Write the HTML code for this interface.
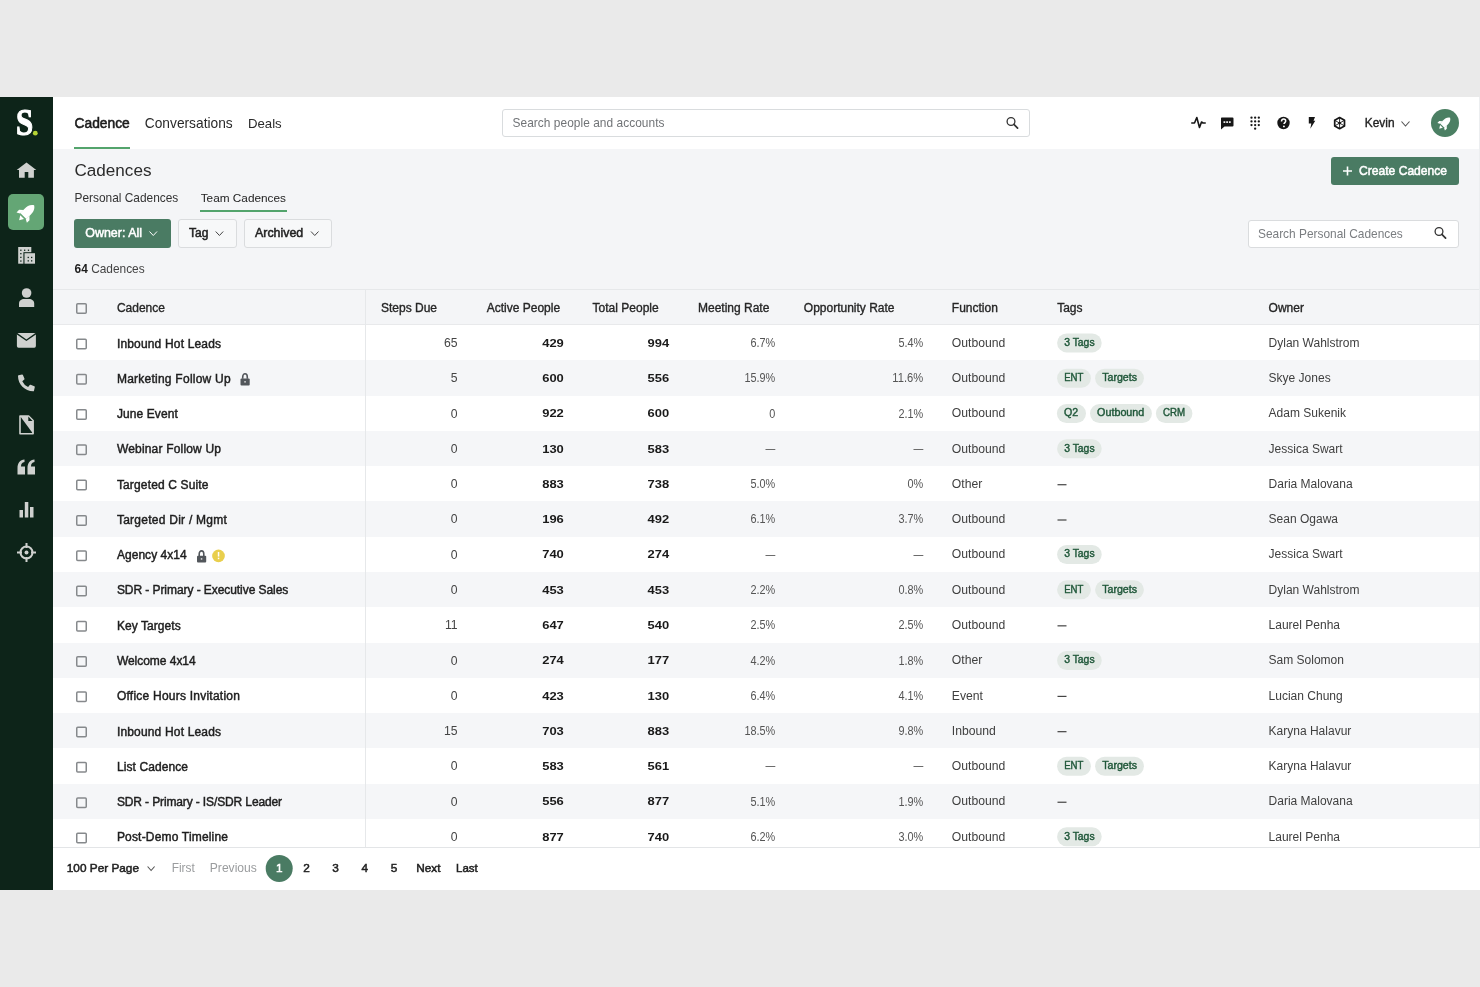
<!DOCTYPE html>
<html><head><meta charset="utf-8"><title>Cadences</title>
<style>
html,body{margin:0;padding:0}
body{width:1480px;height:987px;background:#eaeaea;position:relative;overflow:hidden;font-family:"Liberation Sans", sans-serif;}
#ov{position:absolute;left:0;top:0;will-change:transform}
</style></head><body>
<div style="position:absolute;left:0px;top:97px;width:53px;height:793px;background:#0d2419;"></div>
<div style="position:absolute;left:8px;top:194px;width:36px;height:36px;background:#64a675;border-radius:5px"></div>
<div style="position:absolute;left:53px;top:97px;width:1427px;height:52px;background:#ffffff;"></div>
<div style="position:absolute;left:53px;top:149px;width:1427px;height:741px;background:#f4f5f7;"></div>
<div style="position:absolute;left:74px;top:146.6px;width:56px;height:2.6px;background:#53a46c;"></div>
<div style="position:absolute;left:502px;top:109px;width:528px;height:28px;background:#fff;box-sizing:border-box;border:1px solid #d9dcde;border-radius:3px"></div>
<div style="position:absolute;left:1430.5px;top:109px;width:28px;height:28px;background:#4b7f63;border-radius:50%"></div>
<div style="position:absolute;left:200px;top:209.7px;width:87px;height:2.5px;background:#53a46c;"></div>
<div style="position:absolute;left:1330.5px;top:157px;width:128px;height:28px;background:#4a7b63;border-radius:3px"></div>
<div style="position:absolute;left:74px;top:219px;width:97px;height:28.5px;background:#4a7b63;border-radius:3px"></div>
<div style="position:absolute;left:178px;top:219px;width:59px;height:28.5px;background:#f7f8f9;box-sizing:border-box;border:1px solid #dadcde;border-radius:3px"></div>
<div style="position:absolute;left:244px;top:219px;width:88px;height:28.5px;background:#f7f8f9;box-sizing:border-box;border:1px solid #dadcde;border-radius:3px"></div>
<div style="position:absolute;left:1247.5px;top:219.5px;width:211px;height:28px;background:#fff;box-sizing:border-box;border:1px solid #dadcde;border-radius:3px"></div>
<div style="position:absolute;left:53px;top:289px;width:1427px;height:1px;background:#e6e8ea;"></div>
<div style="position:absolute;left:53px;top:290px;width:1427px;height:35px;background:#f4f5f7;"></div>
<div style="position:absolute;left:53px;top:324px;width:1427px;height:1px;background:#e8e9eb;"></div>
<div style="position:absolute;left:53px;top:325.00px;width:1427px;height:35.28px;background:#ffffff;"></div>
<div style="position:absolute;left:53px;top:360.28px;width:1427px;height:35.28px;background:#f5f6f8;"></div>
<div style="position:absolute;left:53px;top:395.56px;width:1427px;height:35.28px;background:#ffffff;"></div>
<div style="position:absolute;left:53px;top:430.84px;width:1427px;height:35.28px;background:#f5f6f8;"></div>
<div style="position:absolute;left:53px;top:466.12px;width:1427px;height:35.28px;background:#ffffff;"></div>
<div style="position:absolute;left:53px;top:501.40px;width:1427px;height:35.28px;background:#f5f6f8;"></div>
<div style="position:absolute;left:53px;top:536.68px;width:1427px;height:35.28px;background:#ffffff;"></div>
<div style="position:absolute;left:53px;top:571.96px;width:1427px;height:35.28px;background:#f5f6f8;"></div>
<div style="position:absolute;left:53px;top:607.24px;width:1427px;height:35.28px;background:#ffffff;"></div>
<div style="position:absolute;left:53px;top:642.52px;width:1427px;height:35.28px;background:#f5f6f8;"></div>
<div style="position:absolute;left:53px;top:677.80px;width:1427px;height:35.28px;background:#ffffff;"></div>
<div style="position:absolute;left:53px;top:713.08px;width:1427px;height:35.28px;background:#f5f6f8;"></div>
<div style="position:absolute;left:53px;top:748.36px;width:1427px;height:35.28px;background:#ffffff;"></div>
<div style="position:absolute;left:53px;top:783.64px;width:1427px;height:35.28px;background:#f5f6f8;"></div>
<div style="position:absolute;left:53px;top:818.92px;width:1427px;height:28.08px;background:#ffffff;"></div>
<div style="position:absolute;left:364.5px;top:290px;width:1px;height:557px;background:#e6e8ea;"></div>
<div style="position:absolute;left:1479px;top:97px;width:1px;height:793px;background:#eceef0;"></div>
<div style="position:absolute;left:53px;top:846.5px;width:1427px;height:1px;background:#e3e5e7;"></div>
<div style="position:absolute;left:53px;top:847.5px;width:1427px;height:42.5px;background:#ffffff;"></div>
<svg id="ov" width="1480" height="987" viewBox="0 0 1480 987" font-family="Liberation Sans, sans-serif">
<text x="0" y="0" font-family="Liberation Serif" font-weight="700" font-size="30" fill="#fff" stroke="#fff" stroke-width="0.9" transform="translate(16.1 135.2) scale(1.03 1.27)">S</text>
<circle cx="35.3" cy="133.2" r="2.4" fill="#b5d334"/>
<path d="M26.5 162.4 L36.3 170 H33.9 V177.8 H28.3 V172.1 H24.7 V177.8 H19 V170 H16.7 Z" fill="#cfd1cf"/>
<g transform="translate(26.9 212.4) rotate(45) scale(1.02)" fill="#fff"><path d="M0 -10 C3.4 -8 4.2 -4.5 4.2 -1 L4.2 5 L-4.2 5 L-4.2 -1 C-4.2 -4.5 -3.4 -8 0 -10 Z"/><path d="M-4 0.5 L-7.2 3.6 L-7.2 7.2 L-4 5.5 Z M4 0.5 L7.2 3.6 L7.2 7.2 L4 5.5 Z"/><path d="M-2.6 6.6 H2.6 L0 10.8 Z"/></g>
<rect x="18.2" y="247" width="13.1" height="16.7" fill="#cfd1cf"/><rect x="23.4" y="252.2" width="12.6" height="12" fill="#0d2419"/><rect x="24.5" y="253.2" width="10.5" height="10.5" fill="#cfd1cf"/><rect x="20.2" y="249.6" width="1.3" height="1.3" fill="#0d2419"/><rect x="24.0" y="249.6" width="1.3" height="1.3" fill="#0d2419"/><rect x="27.799999999999997" y="249.6" width="1.3" height="1.3" fill="#0d2419"/><rect x="20.2" y="253.0" width="1.3" height="1.3" fill="#0d2419"/><rect x="20.2" y="256.7" width="1.3" height="1.3" fill="#0d2419"/><rect x="20.2" y="260.4" width="1.3" height="1.3" fill="#0d2419"/><rect x="27.599999999999998" y="256.79999999999995" width="1.3" height="1.3" fill="#0d2419"/><rect x="31.0" y="256.79999999999995" width="1.3" height="1.3" fill="#0d2419"/><rect x="27.599999999999998" y="260.2" width="1.3" height="1.3" fill="#0d2419"/><rect x="31.0" y="260.2" width="1.3" height="1.3" fill="#0d2419"/>
<g transform="translate(19 288) scale(1)"><circle cx="7.6" cy="5" r="4.8" fill="#cfd1cf"/><path d="M0 19 V15.5 C0 12.5 2.5 11 5 11 H10.2 C12.7 11 15.2 12.5 15.2 15.5 V19 Z" fill="#cfd1cf"/></g>
<rect x="16.9" y="332.9" width="19" height="14.8" rx="1.6" fill="#cfd1cf"/><path d="M16.9 333.6 L26.4 340.2 L35.9 333.6" fill="none" stroke="#0d2419" stroke-width="1.4"/>
<g transform="translate(18 374.5) scale(0.0328)"><path d="M497.39 361.8l-112-48a24 24 0 0 0-28 6.9l-49.6 60.6A370.66 370.66 0 0 1 130.6 204.11l60.6-49.6a23.94 23.94 0 0 0 6.9-28l-48-112A24.16 24.16 0 0 0 122.6.61l-104 24A24 24 0 0 0 0 48c0 256.5 207.9 464 464 464a24 24 0 0 0 23.4-18.6l24-104a24.29 24.29 0 0 0-14.01-27.6z" fill="#cfd1cf"/></g>
<path d="M20 416.1 H28.6 L33.1 420.6 V433.8 H20 Z" fill="none" stroke="#cfd1cf" stroke-width="1.6" stroke-linejoin="round"/><path d="M20 416.1 H28.6 L33.1 420.6 V433.8 Z" fill="#cfd1cf"/><path d="M28.3 416.6 V421 H32.6 Z" fill="#0d2419"/>
<g transform="translate(17 459) scale(1)"><path d="M0.5 9 C0.5 4 3 1 7.5 0.5 V3 C5 3.5 4 5 4 7.5 H8 V15.5 H0.5 Z" fill="#cfd1cf"/><path d="M10.5 9 C10.5 4 13 1 17.5 0.5 V3 C15 3.5 14 5 14 7.5 H18 V15.5 H10.5 Z" fill="#cfd1cf"/></g>
<g transform="translate(19 501) scale(1)"><rect x="0.5" y="9" width="3.5" height="7.5" fill="#cfd1cf"/><rect x="5.8" y="1" width="3.5" height="15.5" fill="#cfd1cf"/><rect x="11" y="6" width="3.5" height="10.5" fill="#cfd1cf"/></g>
<g transform="translate(17 543) scale(1)"><circle cx="9.5" cy="9.5" r="6" fill="none" stroke="#cfd1cf" stroke-width="2"/><circle cx="9.5" cy="9.5" r="2" fill="#cfd1cf"/><path d="M9.5 0 V5 M9.5 14 V19 M0 9.5 H5 M14 9.5 H19" stroke="#cfd1cf" stroke-width="2"/></g>
<text x="74.50" y="128.00" font-size="13.8" fill="#1c1c1c" stroke="#1c1c1c" stroke-width="0.55">Cadence</text>
<text x="144.80" y="128.00" font-size="13.75" fill="#2a2a2a">Conversations</text>
<text x="248.00" y="128.00" font-size="13.2" fill="#2a2a2a">Deals</text>
<text x="512.50" y="127.00" font-size="11.9" fill="#707376" letter-spacing="0.05">Search people and accounts</text>
<g transform="translate(1006 116.5) scale(1)"><circle cx="5" cy="5" r="3.9" fill="none" stroke="#333" stroke-width="1.3"/><path d="M7.9 7.9 L11.6 11.6" stroke="#333" stroke-width="1.7" stroke-linecap="round"/></g>
<g transform="translate(1191 116) scale(1)"><path d="M0.8 7 H3.5 L5.8 1.5 L8.5 11.5 L10.5 6 L12 7 H14.2" fill="none" stroke="#161616" stroke-width="1.6" stroke-linejoin="round" stroke-linecap="round"/></g>
<g transform="translate(1220 117) scale(1)"><path d="M1.5 0.5 H12.5 A1 1 0 0 1 13.5 1.5 V8.5 A1 1 0 0 1 12.5 9.5 H4.5 L1 12.5 V1.5 A1 1 0 0 1 1.5 0.5 Z" fill="#161616"/><rect x="3.5" y="4.3" width="1.8" height="1.6" fill="#fff"/><rect x="6.2" y="4.3" width="1.8" height="1.6" fill="#fff"/><rect x="8.9" y="4.3" width="1.8" height="1.6" fill="#fff"/></g>
<g transform="translate(1249 116) scale(1)"><circle cx="2.5" cy="1.7" r="1.15" fill="#161616"/><circle cx="2.5" cy="5.4" r="1.15" fill="#161616"/><circle cx="2.5" cy="9.1" r="1.15" fill="#161616"/><circle cx="6.15" cy="1.7" r="1.15" fill="#161616"/><circle cx="6.15" cy="5.4" r="1.15" fill="#161616"/><circle cx="6.15" cy="9.1" r="1.15" fill="#161616"/><circle cx="9.8" cy="1.7" r="1.15" fill="#161616"/><circle cx="9.8" cy="5.4" r="1.15" fill="#161616"/><circle cx="9.8" cy="9.1" r="1.15" fill="#161616"/><circle cx="6.15" cy="12.7" r="1.15" fill="#161616"/></g>
<g transform="translate(1277 116.5) scale(1)"><circle cx="6.5" cy="6.5" r="6.2" fill="#161616"/><path d="M4.5 5 C4.5 3.2 5.5 2.6 6.6 2.6 C7.8 2.6 8.7 3.4 8.7 4.6 C8.7 6 7 6.2 7 7.6" fill="none" stroke="#fff" stroke-width="1.5"/><circle cx="6.9" cy="9.9" r="0.95" fill="#fff"/></g>
<g transform="translate(1308.5 117) scale(1)"><path d="M0.3 0 H6.5 L5 3.8 H6.8 L1.8 11.8 L2.8 6.5 H0.3 Z" fill="#161616"/></g>
<g transform="translate(1333.5 116.5) scale(1)"><path d="M6.1 1 L11 3.8 V9.4 L6.1 12.2 L1.2 9.4 V3.8 Z" fill="none" stroke="#161616" stroke-width="1.7" stroke-linejoin="round"/><path d="M6.1 1 V12.2 M1.2 3.8 L11 9.4 M11 3.8 L1.2 9.4" stroke="#161616" stroke-width="0.9"/><circle cx="6.1" cy="6.6" r="1.3" fill="#161616"/></g>
<text x="1364.80" y="127.00" font-size="11.9" fill="#222" stroke="#222" stroke-width="0.35">Kevin</text>
<g transform="translate(1401.5 121.5) scale(1)"><path d="M0 0 L4.0 4.5 L8 0" fill="none" stroke="#555" stroke-width="1.1"/></g>
<g transform="translate(1444.9 123.0) rotate(45) scale(0.74)" fill="#fff"><path d="M0 -10 C3.4 -8 4.2 -4.5 4.2 -1 L4.2 5 L-4.2 5 L-4.2 -1 C-4.2 -4.5 -3.4 -8 0 -10 Z"/><path d="M-4 0.5 L-7.2 3.6 L-7.2 7.2 L-4 5.5 Z M4 0.5 L7.2 3.6 L7.2 7.2 L4 5.5 Z"/><path d="M-2.6 6.6 H2.6 L0 10.8 Z"/></g>
<text x="74.50" y="176.40" font-size="17.1" fill="#2b2b2b">Cadences</text>
<text x="74.50" y="201.70" font-size="11.9" fill="#333">Personal Cadences</text>
<text x="200.70" y="201.70" font-size="11.8" fill="#222">Team Cadences</text>
<g transform="translate(1342.5 166) scale(1)"><path d="M5 0.5 V9.5 M0.5 5 H9.5" stroke="#fff" stroke-width="1.6"/></g>
<text x="1359.00" y="174.90" font-size="12.1" fill="#fff" stroke="#fff" stroke-width="0.5">Create Cadence</text>
<text x="85.30" y="236.80" font-size="12.45" fill="#fff" stroke="#fff" stroke-width="0.5">Owner: All</text>
<g transform="translate(149.5 231.5) scale(1)"><path d="M0 0 L3.75 4 L7.5 0" fill="none" stroke="#fff" stroke-width="1.0"/></g>
<text x="189.00" y="236.80" font-size="12.0" fill="#222" stroke="#222" stroke-width="0.5">Tag</text>
<g transform="translate(215.7 231.5) scale(1)"><path d="M0 0 L3.75 4 L7.5 0" fill="none" stroke="#444" stroke-width="1.0"/></g>
<text x="255.00" y="236.80" font-size="12.4" fill="#222" stroke="#222" stroke-width="0.5">Archived</text>
<g transform="translate(311 231.5) scale(1)"><path d="M0 0 L3.75 4 L7.5 0" fill="none" stroke="#444" stroke-width="1.0"/></g>
<text x="74.60" y="272.80" font-size="11.9" fill="#444"><tspan font-weight="700" fill="#1c1c1c">64</tspan> Cadences</text>
<text x="1258.00" y="237.50" font-size="11.9" fill="#7a7d80">Search Personal Cadences</text>
<g transform="translate(1434 226.5) scale(1)"><circle cx="5" cy="5" r="3.9" fill="none" stroke="#333" stroke-width="1.3"/><path d="M7.9 7.9 L11.6 11.6" stroke="#333" stroke-width="1.7" stroke-linecap="round"/></g>
<rect x="76.75" y="303.75" width="9.5" height="9.5" rx="1" fill="none" stroke="#86898c" stroke-width="1.5"/>
<text x="116.90" y="312.00" font-size="12.0" fill="#262626" stroke="#262626" stroke-width="0.35">Cadence</text>
<text x="381.00" y="312.00" font-size="12.0" fill="#262626" stroke="#262626" stroke-width="0.35">Steps Due</text>
<text x="486.70" y="312.00" font-size="12.0" fill="#262626" stroke="#262626" stroke-width="0.35">Active People</text>
<text x="592.60" y="312.00" font-size="12.0" fill="#262626" stroke="#262626" stroke-width="0.35">Total People</text>
<text x="698.00" y="312.00" font-size="12.0" fill="#262626" stroke="#262626" stroke-width="0.35">Meeting Rate</text>
<text x="803.80" y="312.00" font-size="12.0" fill="#262626" stroke="#262626" stroke-width="0.35">Opportunity Rate</text>
<text x="951.80" y="312.00" font-size="12.0" fill="#262626" stroke="#262626" stroke-width="0.35">Function</text>
<text x="1057.20" y="312.00" font-size="12.0" fill="#262626" stroke="#262626" stroke-width="0.35">Tags</text>
<text x="1268.60" y="312.00" font-size="12.0" fill="#262626" stroke="#262626" stroke-width="0.35">Owner</text>
<rect x="76.75" y="339.25" width="9.5" height="9.5" rx="1" fill="none" stroke="#86898c" stroke-width="1.5"/>
<text x="116.90" y="347.50" font-size="12.0" fill="#1e1e1e" stroke="#1e1e1e" stroke-width="0.45" textLength="104.10" lengthAdjust="spacing">Inbound Hot Leads</text>
<text x="457.60" y="347.00" font-size="12.2" fill="#444" text-anchor="end">65</text>
<text x="563.80" y="346.70" font-size="11.8" fill="#1a1a1a" font-weight="700" text-anchor="end" textLength="21.60" lengthAdjust="spacingAndGlyphs">429</text>
<text x="669.20" y="346.70" font-size="11.8" fill="#1a1a1a" font-weight="700" text-anchor="end" textLength="21.60" lengthAdjust="spacingAndGlyphs">994</text>
<text x="775.30" y="347.00" font-size="12.3" fill="#555" text-anchor="end" textLength="24.81" lengthAdjust="spacingAndGlyphs">6.7%</text>
<text x="923.20" y="347.00" font-size="12.3" fill="#555" text-anchor="end" textLength="24.81" lengthAdjust="spacingAndGlyphs">5.4%</text>
<text x="951.80" y="346.80" font-size="12.2" fill="#404040">Outbound</text>
<rect x="1057.1" y="333.40" width="44.6" height="19" rx="9.5" fill="#e3e9e5"/>
<text x="1064.20" y="345.70" font-size="10.0" fill="#1f5739" stroke="#1f5739" stroke-width="0.4" textLength="30.40" lengthAdjust="spacingAndGlyphs">3 Tags</text>
<text x="1268.60" y="346.80" font-size="12.0" fill="#404040">Dylan Wahlstrom</text>
<rect x="76.75" y="374.53" width="9.5" height="9.5" rx="1" fill="none" stroke="#86898c" stroke-width="1.5"/>
<text x="116.90" y="382.78" font-size="12.0" fill="#1e1e1e" stroke="#1e1e1e" stroke-width="0.45" textLength="113.80" lengthAdjust="spacing">Marketing Follow Up</text>
<g transform="translate(240.3 372.78) scale(1)"><path d="M2.4 6 V4.2 C2.4 2.2 3.5 1 4.7 1 C5.9 1 7 2.2 7 4.2 V6" fill="none" stroke="#52565b" stroke-width="1.6"/><rect x="0.2" y="5.8" width="9.2" height="6.8" rx="1" fill="#52565b"/><rect x="4" y="8.3" width="1.5" height="1.5" fill="#ddd"/></g>
<text x="457.60" y="382.28" font-size="12.2" fill="#444" text-anchor="end">5</text>
<text x="563.80" y="381.98" font-size="11.8" fill="#1a1a1a" font-weight="700" text-anchor="end" textLength="21.60" lengthAdjust="spacingAndGlyphs">600</text>
<text x="669.20" y="381.98" font-size="11.8" fill="#1a1a1a" font-weight="700" text-anchor="end" textLength="21.60" lengthAdjust="spacingAndGlyphs">556</text>
<text x="775.30" y="382.28" font-size="12.3" fill="#555" text-anchor="end" textLength="30.86" lengthAdjust="spacingAndGlyphs">15.9%</text>
<text x="923.20" y="382.28" font-size="12.3" fill="#555" text-anchor="end" textLength="30.86" lengthAdjust="spacingAndGlyphs">11.6%</text>
<text x="951.80" y="382.08" font-size="12.2" fill="#404040">Outbound</text>
<rect x="1057.1" y="368.68" width="33.8" height="19" rx="9.5" fill="#e3e9e5"/>
<text x="1064.20" y="380.98" font-size="10.0" fill="#1f5739" stroke="#1f5739" stroke-width="0.4" textLength="19.20" lengthAdjust="spacingAndGlyphs">ENT</text>
<rect x="1095.1" y="368.68" width="48.8" height="19" rx="9.5" fill="#e3e9e5"/>
<text x="1102.20" y="380.98" font-size="10.0" fill="#1f5739" stroke="#1f5739" stroke-width="0.4" textLength="34.80" lengthAdjust="spacingAndGlyphs">Targets</text>
<text x="1268.60" y="382.08" font-size="12.0" fill="#404040">Skye Jones</text>
<rect x="76.75" y="409.81" width="9.5" height="9.5" rx="1" fill="none" stroke="#86898c" stroke-width="1.5"/>
<text x="116.90" y="418.06" font-size="12.0" fill="#1e1e1e" stroke="#1e1e1e" stroke-width="0.45" textLength="60.90" lengthAdjust="spacing">June Event</text>
<text x="457.60" y="417.56" font-size="12.2" fill="#444" text-anchor="end">0</text>
<text x="563.80" y="417.26" font-size="11.8" fill="#1a1a1a" font-weight="700" text-anchor="end" textLength="21.60" lengthAdjust="spacingAndGlyphs">922</text>
<text x="669.20" y="417.26" font-size="11.8" fill="#1a1a1a" font-weight="700" text-anchor="end" textLength="21.60" lengthAdjust="spacingAndGlyphs">600</text>
<text x="775.30" y="417.56" font-size="12.3" fill="#555" text-anchor="end" textLength="6.05" lengthAdjust="spacingAndGlyphs">0</text>
<text x="923.20" y="417.56" font-size="12.3" fill="#555" text-anchor="end" textLength="24.81" lengthAdjust="spacingAndGlyphs">2.1%</text>
<text x="951.80" y="417.36" font-size="12.2" fill="#404040">Outbound</text>
<rect x="1056.9" y="403.96" width="29.1" height="19" rx="9.5" fill="#e3e9e5"/>
<text x="1064.00" y="416.26" font-size="10.0" fill="#1f5739" stroke="#1f5739" stroke-width="0.4" textLength="14.20" lengthAdjust="spacingAndGlyphs">Q2</text>
<rect x="1090" y="403.96" width="61.9" height="19" rx="9.5" fill="#e3e9e5"/>
<text x="1097.10" y="416.26" font-size="10.0" fill="#1f5739" stroke="#1f5739" stroke-width="0.4" textLength="47.20" lengthAdjust="spacingAndGlyphs">Outbound</text>
<rect x="1155.9" y="403.96" width="36.5" height="19" rx="9.5" fill="#e3e9e5"/>
<text x="1163.00" y="416.26" font-size="10.0" fill="#1f5739" stroke="#1f5739" stroke-width="0.4" textLength="22.10" lengthAdjust="spacingAndGlyphs">CRM</text>
<text x="1268.60" y="417.36" font-size="12.0" fill="#404040">Adam Sukenik</text>
<rect x="76.75" y="445.09000000000003" width="9.5" height="9.5" rx="1" fill="none" stroke="#86898c" stroke-width="1.5"/>
<text x="116.90" y="453.34" font-size="12.0" fill="#1e1e1e" stroke="#1e1e1e" stroke-width="0.45" textLength="104.10" lengthAdjust="spacing">Webinar Follow Up</text>
<text x="457.60" y="452.84" font-size="12.2" fill="#444" text-anchor="end">0</text>
<text x="563.80" y="452.54" font-size="11.8" fill="#1a1a1a" font-weight="700" text-anchor="end" textLength="21.60" lengthAdjust="spacingAndGlyphs">130</text>
<text x="669.20" y="452.54" font-size="11.8" fill="#1a1a1a" font-weight="700" text-anchor="end" textLength="21.60" lengthAdjust="spacingAndGlyphs">583</text>
<text x="775.30" y="452.84" font-size="12.3" fill="#555" text-anchor="end" textLength="9.80" lengthAdjust="spacingAndGlyphs">—</text>
<text x="923.20" y="452.84" font-size="12.3" fill="#555" text-anchor="end" textLength="9.80" lengthAdjust="spacingAndGlyphs">—</text>
<text x="951.80" y="452.64" font-size="12.2" fill="#404040">Outbound</text>
<rect x="1057.1" y="439.24" width="44.6" height="19" rx="9.5" fill="#e3e9e5"/>
<text x="1064.20" y="451.54" font-size="10.0" fill="#1f5739" stroke="#1f5739" stroke-width="0.4" textLength="30.40" lengthAdjust="spacingAndGlyphs">3 Tags</text>
<text x="1268.60" y="452.64" font-size="12.0" fill="#404040">Jessica Swart</text>
<rect x="76.75" y="480.37" width="9.5" height="9.5" rx="1" fill="none" stroke="#86898c" stroke-width="1.5"/>
<text x="116.90" y="488.62" font-size="12.0" fill="#1e1e1e" stroke="#1e1e1e" stroke-width="0.45" textLength="91.60" lengthAdjust="spacing">Targeted C Suite</text>
<text x="457.60" y="488.12" font-size="12.2" fill="#444" text-anchor="end">0</text>
<text x="563.80" y="487.82" font-size="11.8" fill="#1a1a1a" font-weight="700" text-anchor="end" textLength="21.60" lengthAdjust="spacingAndGlyphs">883</text>
<text x="669.20" y="487.82" font-size="11.8" fill="#1a1a1a" font-weight="700" text-anchor="end" textLength="21.60" lengthAdjust="spacingAndGlyphs">738</text>
<text x="775.30" y="488.12" font-size="12.3" fill="#555" text-anchor="end" textLength="24.81" lengthAdjust="spacingAndGlyphs">5.0%</text>
<text x="923.20" y="488.12" font-size="12.3" fill="#555" text-anchor="end" textLength="15.73" lengthAdjust="spacingAndGlyphs">0%</text>
<text x="951.80" y="487.92" font-size="12.2" fill="#404040">Other</text>
<rect x="1057.5" y="484.12" width="9" height="1.2" fill="#444"/>
<text x="1268.60" y="487.92" font-size="12.0" fill="#404040">Daria Malovana</text>
<rect x="76.75" y="515.65" width="9.5" height="9.5" rx="1" fill="none" stroke="#86898c" stroke-width="1.5"/>
<text x="116.90" y="523.90" font-size="12.0" fill="#1e1e1e" stroke="#1e1e1e" stroke-width="0.45" textLength="110.00" lengthAdjust="spacing">Targeted Dir / Mgmt</text>
<text x="457.60" y="523.40" font-size="12.2" fill="#444" text-anchor="end">0</text>
<text x="563.80" y="523.10" font-size="11.8" fill="#1a1a1a" font-weight="700" text-anchor="end" textLength="21.60" lengthAdjust="spacingAndGlyphs">196</text>
<text x="669.20" y="523.10" font-size="11.8" fill="#1a1a1a" font-weight="700" text-anchor="end" textLength="21.60" lengthAdjust="spacingAndGlyphs">492</text>
<text x="775.30" y="523.40" font-size="12.3" fill="#555" text-anchor="end" textLength="24.81" lengthAdjust="spacingAndGlyphs">6.1%</text>
<text x="923.20" y="523.40" font-size="12.3" fill="#555" text-anchor="end" textLength="24.81" lengthAdjust="spacingAndGlyphs">3.7%</text>
<text x="951.80" y="523.20" font-size="12.2" fill="#404040">Outbound</text>
<rect x="1057.5" y="519.40" width="9" height="1.2" fill="#444"/>
<text x="1268.60" y="523.20" font-size="12.0" fill="#404040">Sean Ogawa</text>
<rect x="76.75" y="550.9300000000001" width="9.5" height="9.5" rx="1" fill="none" stroke="#86898c" stroke-width="1.5"/>
<text x="116.90" y="559.18" font-size="12.0" fill="#1e1e1e" stroke="#1e1e1e" stroke-width="0.45" textLength="69.80" lengthAdjust="spacing">Agency 4x14</text>
<g transform="translate(196.8 549.8800000000001) scale(1)"><path d="M2.4 6 V4.2 C2.4 2.2 3.5 1 4.7 1 C5.9 1 7 2.2 7 4.2 V6" fill="none" stroke="#52565b" stroke-width="1.6"/><rect x="0.2" y="5.8" width="9.2" height="6.8" rx="1" fill="#52565b"/><rect x="4" y="8.3" width="1.5" height="1.5" fill="#ddd"/></g>
<circle cx="218.5" cy="555.88" r="6.35" fill="#e9cf4d"/><rect x="217.8" y="551.98" width="1.5" height="4.6" fill="#fff"/><rect x="217.8" y="557.68" width="1.5" height="1.5" fill="#fff"/>
<text x="457.60" y="558.68" font-size="12.2" fill="#444" text-anchor="end">0</text>
<text x="563.80" y="558.38" font-size="11.8" fill="#1a1a1a" font-weight="700" text-anchor="end" textLength="21.60" lengthAdjust="spacingAndGlyphs">740</text>
<text x="669.20" y="558.38" font-size="11.8" fill="#1a1a1a" font-weight="700" text-anchor="end" textLength="21.60" lengthAdjust="spacingAndGlyphs">274</text>
<text x="775.30" y="558.68" font-size="12.3" fill="#555" text-anchor="end" textLength="9.80" lengthAdjust="spacingAndGlyphs">—</text>
<text x="923.20" y="558.68" font-size="12.3" fill="#555" text-anchor="end" textLength="9.80" lengthAdjust="spacingAndGlyphs">—</text>
<text x="951.80" y="558.48" font-size="12.2" fill="#404040">Outbound</text>
<rect x="1057.1" y="545.08" width="44.6" height="19" rx="9.5" fill="#e3e9e5"/>
<text x="1064.20" y="557.38" font-size="10.0" fill="#1f5739" stroke="#1f5739" stroke-width="0.4" textLength="30.40" lengthAdjust="spacingAndGlyphs">3 Tags</text>
<text x="1268.60" y="558.48" font-size="12.0" fill="#404040">Jessica Swart</text>
<rect x="76.75" y="586.21" width="9.5" height="9.5" rx="1" fill="none" stroke="#86898c" stroke-width="1.5"/>
<text x="116.90" y="594.46" font-size="12.0" fill="#1e1e1e" stroke="#1e1e1e" stroke-width="0.45" textLength="171.40" lengthAdjust="spacing">SDR - Primary - Executive Sales</text>
<text x="457.60" y="593.96" font-size="12.2" fill="#444" text-anchor="end">0</text>
<text x="563.80" y="593.66" font-size="11.8" fill="#1a1a1a" font-weight="700" text-anchor="end" textLength="21.60" lengthAdjust="spacingAndGlyphs">453</text>
<text x="669.20" y="593.66" font-size="11.8" fill="#1a1a1a" font-weight="700" text-anchor="end" textLength="21.60" lengthAdjust="spacingAndGlyphs">453</text>
<text x="775.30" y="593.96" font-size="12.3" fill="#555" text-anchor="end" textLength="24.81" lengthAdjust="spacingAndGlyphs">2.2%</text>
<text x="923.20" y="593.96" font-size="12.3" fill="#555" text-anchor="end" textLength="24.81" lengthAdjust="spacingAndGlyphs">0.8%</text>
<text x="951.80" y="593.76" font-size="12.2" fill="#404040">Outbound</text>
<rect x="1057.1" y="580.36" width="33.8" height="19" rx="9.5" fill="#e3e9e5"/>
<text x="1064.20" y="592.66" font-size="10.0" fill="#1f5739" stroke="#1f5739" stroke-width="0.4" textLength="19.20" lengthAdjust="spacingAndGlyphs">ENT</text>
<rect x="1095.1" y="580.36" width="48.8" height="19" rx="9.5" fill="#e3e9e5"/>
<text x="1102.20" y="592.66" font-size="10.0" fill="#1f5739" stroke="#1f5739" stroke-width="0.4" textLength="34.80" lengthAdjust="spacingAndGlyphs">Targets</text>
<text x="1268.60" y="593.76" font-size="12.0" fill="#404040">Dylan Wahlstrom</text>
<rect x="76.75" y="621.49" width="9.5" height="9.5" rx="1" fill="none" stroke="#86898c" stroke-width="1.5"/>
<text x="116.90" y="629.74" font-size="12.0" fill="#1e1e1e" stroke="#1e1e1e" stroke-width="0.45" textLength="63.80" lengthAdjust="spacing">Key Targets</text>
<text x="457.60" y="629.24" font-size="12.2" fill="#444" text-anchor="end">11</text>
<text x="563.80" y="628.94" font-size="11.8" fill="#1a1a1a" font-weight="700" text-anchor="end" textLength="21.60" lengthAdjust="spacingAndGlyphs">647</text>
<text x="669.20" y="628.94" font-size="11.8" fill="#1a1a1a" font-weight="700" text-anchor="end" textLength="21.60" lengthAdjust="spacingAndGlyphs">540</text>
<text x="775.30" y="629.24" font-size="12.3" fill="#555" text-anchor="end" textLength="24.81" lengthAdjust="spacingAndGlyphs">2.5%</text>
<text x="923.20" y="629.24" font-size="12.3" fill="#555" text-anchor="end" textLength="24.81" lengthAdjust="spacingAndGlyphs">2.5%</text>
<text x="951.80" y="629.04" font-size="12.2" fill="#404040">Outbound</text>
<rect x="1057.5" y="625.24" width="9" height="1.2" fill="#444"/>
<text x="1268.60" y="629.04" font-size="12.0" fill="#404040">Laurel Penha</text>
<rect x="76.75" y="656.77" width="9.5" height="9.5" rx="1" fill="none" stroke="#86898c" stroke-width="1.5"/>
<text x="116.90" y="665.02" font-size="12.0" fill="#1e1e1e" stroke="#1e1e1e" stroke-width="0.45" textLength="78.80" lengthAdjust="spacing">Welcome 4x14</text>
<text x="457.60" y="664.52" font-size="12.2" fill="#444" text-anchor="end">0</text>
<text x="563.80" y="664.22" font-size="11.8" fill="#1a1a1a" font-weight="700" text-anchor="end" textLength="21.60" lengthAdjust="spacingAndGlyphs">274</text>
<text x="669.20" y="664.22" font-size="11.8" fill="#1a1a1a" font-weight="700" text-anchor="end" textLength="21.60" lengthAdjust="spacingAndGlyphs">177</text>
<text x="775.30" y="664.52" font-size="12.3" fill="#555" text-anchor="end" textLength="24.81" lengthAdjust="spacingAndGlyphs">4.2%</text>
<text x="923.20" y="664.52" font-size="12.3" fill="#555" text-anchor="end" textLength="24.81" lengthAdjust="spacingAndGlyphs">1.8%</text>
<text x="951.80" y="664.32" font-size="12.2" fill="#404040">Other</text>
<rect x="1057.1" y="650.92" width="44.6" height="19" rx="9.5" fill="#e3e9e5"/>
<text x="1064.20" y="663.22" font-size="10.0" fill="#1f5739" stroke="#1f5739" stroke-width="0.4" textLength="30.40" lengthAdjust="spacingAndGlyphs">3 Tags</text>
<text x="1268.60" y="664.32" font-size="12.0" fill="#404040">Sam Solomon</text>
<rect x="76.75" y="692.05" width="9.5" height="9.5" rx="1" fill="none" stroke="#86898c" stroke-width="1.5"/>
<text x="116.90" y="700.30" font-size="12.0" fill="#1e1e1e" stroke="#1e1e1e" stroke-width="0.45" textLength="123.00" lengthAdjust="spacing">Office Hours Invitation</text>
<text x="457.60" y="699.80" font-size="12.2" fill="#444" text-anchor="end">0</text>
<text x="563.80" y="699.50" font-size="11.8" fill="#1a1a1a" font-weight="700" text-anchor="end" textLength="21.60" lengthAdjust="spacingAndGlyphs">423</text>
<text x="669.20" y="699.50" font-size="11.8" fill="#1a1a1a" font-weight="700" text-anchor="end" textLength="21.60" lengthAdjust="spacingAndGlyphs">130</text>
<text x="775.30" y="699.80" font-size="12.3" fill="#555" text-anchor="end" textLength="24.81" lengthAdjust="spacingAndGlyphs">6.4%</text>
<text x="923.20" y="699.80" font-size="12.3" fill="#555" text-anchor="end" textLength="24.81" lengthAdjust="spacingAndGlyphs">4.1%</text>
<text x="951.80" y="699.60" font-size="12.2" fill="#404040">Event</text>
<rect x="1057.5" y="695.80" width="9" height="1.2" fill="#444"/>
<text x="1268.60" y="699.60" font-size="12.0" fill="#404040">Lucian Chung</text>
<rect x="76.75" y="727.33" width="9.5" height="9.5" rx="1" fill="none" stroke="#86898c" stroke-width="1.5"/>
<text x="116.90" y="735.58" font-size="12.0" fill="#1e1e1e" stroke="#1e1e1e" stroke-width="0.45" textLength="104.10" lengthAdjust="spacing">Inbound Hot Leads</text>
<text x="457.60" y="735.08" font-size="12.2" fill="#444" text-anchor="end">15</text>
<text x="563.80" y="734.78" font-size="11.8" fill="#1a1a1a" font-weight="700" text-anchor="end" textLength="21.60" lengthAdjust="spacingAndGlyphs">703</text>
<text x="669.20" y="734.78" font-size="11.8" fill="#1a1a1a" font-weight="700" text-anchor="end" textLength="21.60" lengthAdjust="spacingAndGlyphs">883</text>
<text x="775.30" y="735.08" font-size="12.3" fill="#555" text-anchor="end" textLength="30.86" lengthAdjust="spacingAndGlyphs">18.5%</text>
<text x="923.20" y="735.08" font-size="12.3" fill="#555" text-anchor="end" textLength="24.81" lengthAdjust="spacingAndGlyphs">9.8%</text>
<text x="951.80" y="734.88" font-size="12.2" fill="#404040">Inbound</text>
<rect x="1057.5" y="731.08" width="9" height="1.2" fill="#444"/>
<text x="1268.60" y="734.88" font-size="12.0" fill="#404040">Karyna Halavur</text>
<rect x="76.75" y="762.61" width="9.5" height="9.5" rx="1" fill="none" stroke="#86898c" stroke-width="1.5"/>
<text x="116.90" y="770.86" font-size="12.0" fill="#1e1e1e" stroke="#1e1e1e" stroke-width="0.45" textLength="71.10" lengthAdjust="spacing">List Cadence</text>
<text x="457.60" y="770.36" font-size="12.2" fill="#444" text-anchor="end">0</text>
<text x="563.80" y="770.06" font-size="11.8" fill="#1a1a1a" font-weight="700" text-anchor="end" textLength="21.60" lengthAdjust="spacingAndGlyphs">583</text>
<text x="669.20" y="770.06" font-size="11.8" fill="#1a1a1a" font-weight="700" text-anchor="end" textLength="21.60" lengthAdjust="spacingAndGlyphs">561</text>
<text x="775.30" y="770.36" font-size="12.3" fill="#555" text-anchor="end" textLength="9.80" lengthAdjust="spacingAndGlyphs">—</text>
<text x="923.20" y="770.36" font-size="12.3" fill="#555" text-anchor="end" textLength="9.80" lengthAdjust="spacingAndGlyphs">—</text>
<text x="951.80" y="770.16" font-size="12.2" fill="#404040">Outbound</text>
<rect x="1057.1" y="756.76" width="33.8" height="19" rx="9.5" fill="#e3e9e5"/>
<text x="1064.20" y="769.06" font-size="10.0" fill="#1f5739" stroke="#1f5739" stroke-width="0.4" textLength="19.20" lengthAdjust="spacingAndGlyphs">ENT</text>
<rect x="1095.1" y="756.76" width="48.8" height="19" rx="9.5" fill="#e3e9e5"/>
<text x="1102.20" y="769.06" font-size="10.0" fill="#1f5739" stroke="#1f5739" stroke-width="0.4" textLength="34.80" lengthAdjust="spacingAndGlyphs">Targets</text>
<text x="1268.60" y="770.16" font-size="12.0" fill="#404040">Karyna Halavur</text>
<rect x="76.75" y="797.89" width="9.5" height="9.5" rx="1" fill="none" stroke="#86898c" stroke-width="1.5"/>
<text x="116.90" y="806.14" font-size="12.0" fill="#1e1e1e" stroke="#1e1e1e" stroke-width="0.45" textLength="165.20" lengthAdjust="spacing">SDR - Primary - IS/SDR Leader</text>
<text x="457.60" y="805.64" font-size="12.2" fill="#444" text-anchor="end">0</text>
<text x="563.80" y="805.34" font-size="11.8" fill="#1a1a1a" font-weight="700" text-anchor="end" textLength="21.60" lengthAdjust="spacingAndGlyphs">556</text>
<text x="669.20" y="805.34" font-size="11.8" fill="#1a1a1a" font-weight="700" text-anchor="end" textLength="21.60" lengthAdjust="spacingAndGlyphs">877</text>
<text x="775.30" y="805.64" font-size="12.3" fill="#555" text-anchor="end" textLength="24.81" lengthAdjust="spacingAndGlyphs">5.1%</text>
<text x="923.20" y="805.64" font-size="12.3" fill="#555" text-anchor="end" textLength="24.81" lengthAdjust="spacingAndGlyphs">1.9%</text>
<text x="951.80" y="805.44" font-size="12.2" fill="#404040">Outbound</text>
<rect x="1057.5" y="801.64" width="9" height="1.2" fill="#444"/>
<text x="1268.60" y="805.44" font-size="12.0" fill="#404040">Daria Malovana</text>
<rect x="76.75" y="833.1700000000001" width="9.5" height="9.5" rx="1" fill="none" stroke="#86898c" stroke-width="1.5"/>
<text x="116.90" y="841.42" font-size="12.0" fill="#1e1e1e" stroke="#1e1e1e" stroke-width="0.45" textLength="111.10" lengthAdjust="spacing">Post-Demo Timeline</text>
<text x="457.60" y="840.92" font-size="12.2" fill="#444" text-anchor="end">0</text>
<text x="563.80" y="840.62" font-size="11.8" fill="#1a1a1a" font-weight="700" text-anchor="end" textLength="21.60" lengthAdjust="spacingAndGlyphs">877</text>
<text x="669.20" y="840.62" font-size="11.8" fill="#1a1a1a" font-weight="700" text-anchor="end" textLength="21.60" lengthAdjust="spacingAndGlyphs">740</text>
<text x="775.30" y="840.92" font-size="12.3" fill="#555" text-anchor="end" textLength="24.81" lengthAdjust="spacingAndGlyphs">6.2%</text>
<text x="923.20" y="840.92" font-size="12.3" fill="#555" text-anchor="end" textLength="24.81" lengthAdjust="spacingAndGlyphs">3.0%</text>
<text x="951.80" y="840.72" font-size="12.2" fill="#404040">Outbound</text>
<rect x="1057.1" y="827.32" width="44.6" height="19" rx="9.5" fill="#e3e9e5"/>
<text x="1064.20" y="839.62" font-size="10.0" fill="#1f5739" stroke="#1f5739" stroke-width="0.4" textLength="30.40" lengthAdjust="spacingAndGlyphs">3 Tags</text>
<text x="1268.60" y="840.72" font-size="12.0" fill="#404040">Laurel Penha</text>
<text x="66.80" y="872.40" font-size="11.8" fill="#222" stroke="#222" stroke-width="0.5">100 Per Page</text>
<g transform="translate(147.6 866.5) scale(1)"><path d="M0 0 L3.5 4 L7 0" fill="none" stroke="#555" stroke-width="1.1"/></g>
<text x="171.70" y="872.40" font-size="11.9" fill="#9a9c9e">First</text>
<text x="209.80" y="872.40" font-size="12.1" fill="#9a9c9e">Previous</text>
<circle cx="279.2" cy="868.4" r="13.5" fill="#4a7b63"/>
<text x="279.30" y="872.40" font-size="11.8" fill="#fff" text-anchor="middle" stroke="#fff" stroke-width="0.5">1</text>
<text x="306.60" y="872.40" font-size="11.8" fill="#222" text-anchor="middle" stroke="#222" stroke-width="0.5">2</text>
<text x="335.60" y="872.40" font-size="11.8" fill="#222" text-anchor="middle" stroke="#222" stroke-width="0.5">3</text>
<text x="364.70" y="872.40" font-size="11.8" fill="#222" text-anchor="middle" stroke="#222" stroke-width="0.5">4</text>
<text x="394.00" y="872.40" font-size="11.8" fill="#222" text-anchor="middle" stroke="#222" stroke-width="0.5">5</text>
<text x="416.20" y="872.40" font-size="11.8" fill="#222" stroke="#222" stroke-width="0.5">Next</text>
<text x="456.00" y="872.40" font-size="11.5" fill="#222" stroke="#222" stroke-width="0.5">Last</text>
</svg>
</body></html>
